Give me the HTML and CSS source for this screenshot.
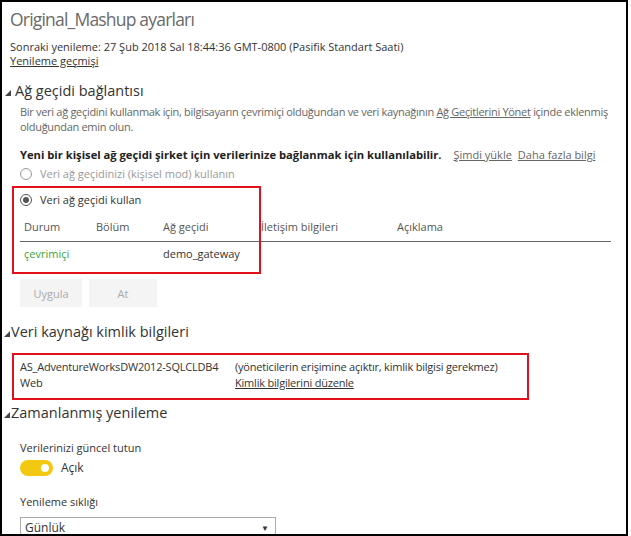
FILE: index.html
```html
<!DOCTYPE html>
<html lang="tr">
<head>
<meta charset="utf-8">
<title>Original_Mashup ayarları</title>
<link rel="stylesheet" href="styles.css">
</head>
<body>
<div class="frame">
  <h1 class="title">Original_Mashup ayarları</h1>
  <div class="meta">
    <div class="line">Sonraki yenileme: 27 Şub 2018 Sal 18:44:36 GMT-0800 (Pasifik Standart Saati)</div>
    <a class="line link dark">Yenileme geçmişi</a>
  </div>

  <h2 class="section first"><span class="tri"></span>Ağ geçidi bağlantısı</h2>
  <div class="sec-body gw">
    <p class="para">Bir veri ağ geçidini kullanmak için, bilgisayarın çevrimiçi olduğundan ve veri kaynağının <a class="link">Ağ Geçitlerini Yönet</a> içinde eklenmiş olduğundan emin olun.</p>
    <div class="boldrow">
      <span class="bold">Yeni bir kişisel ağ geçidi şirket için verilerinize bağlanmak için kullanılabilir.</span>
      <a class="link small">Şimdi yükle</a>
      <a class="link small">Daha fazla bilgi</a>
    </div>
    <div class="radio disabled"><span class="circle"></span>Veri ağ geçidinizi (kişisel mod) kullanın</div>
    <div class="radio"><span class="circle checked"></span>Veri ağ geçidi kullan</div>
    <div class="table">
      <div class="trow head">
        <span class="c1">Durum</span><span class="c2">Bölüm</span><span class="c3">Ağ geçidi</span><span class="c4">İletişim bilgileri</span><span class="c5">Açıklama</span>
      </div>
      <div class="trow">
        <span class="c1 online">çevrimiçi</span><span class="c2"></span><span class="c3">demo_gateway</span><span class="c4"></span><span class="c5"></span>
      </div>
    </div>
    <div class="buttons">
      <span class="btn b1">Uygula</span>
      <span class="btn b2">At</span>
    </div>
    <div class="highlight"></div>
  </div>

  <h2 class="section s2"><span class="tri"></span>Veri kaynağı kimlik bilgileri</h2>
  <div class="credbox">
    <div>AS_AdventureWorksDW2012-SQLCLDB4</div>
    <div>(yöneticilerin erişimine açıktır, kimlik bilgisi gerekmez)</div>
    <div>Web</div>
    <div><a class="link dark">Kimlik bilgilerini düzenle</a></div>
  </div>

  <h2 class="section s3"><span class="tri"></span>Zamanlanmış yenileme</h2>
  <div class="sec-body sched">
    <div class="label">Verilerinizi güncel tutun</div>
    <div class="toggle-row"><span class="toggle"><span class="knob"></span></span><span class="on">Açık</span></div>
    <div class="label l2">Yenileme sıklığı</div>
    <div class="select"><span>Günlük</span><span class="arrow">▼</span></div>
  </div>
</div>
</body>
</html>
```
FILE: styles.css
```css
html, body {
  margin: 0;
  padding: 0;
  background: #fff;
}
body {
  font-family: "Open Sans", "Noto Sans", sans-serif;
  font-size: 11px;
  color: #333;
}
.frame {
  box-sizing: border-box;
  width: 628px;
  height: 536px;
  border: 2px solid #000;
  padding: 0 0 0 8px;
  overflow: hidden;
}
.title {
  margin: 4px 0 0 0;
  font-size: 17.5px;
  letter-spacing: -0.8px;
  font-weight: 400;
  color: #6a6a6a;
  line-height: 26px;
}
.meta {
  margin-top: 8px;
}
.line {
  display: block;
  line-height: 14px;
  height: 14px;
}
.link {
  text-decoration: underline;
  color: #666;
}
.link.dark {
  color: #333;
}
.section {
  display: flex;
  align-items: center;
  margin: 13px 0 0 -5px;
  font-size: 14.5px;
  font-weight: 400;
  color: #333;
  line-height: 20px;
  height: 20px;
}
.tri {
  width: 0;
  height: 0;
  border-left: 6px solid transparent;
  border-bottom: 6px solid #444;
  margin: 4px 1px 0 -1px;
}
.section.first .tri {
  margin-right: 4px;
  margin-left: 0;
}
.sec-body {
  padding: 3px 0 0 10px;
  position: relative;
}
.para {
  margin: 0;
  color: #666;
  line-height: 15px;
  letter-spacing: -0.3px;
}
.boldrow {
  margin-top: 13px;
  display: flex;
  align-items: baseline;
  line-height: 15px;
  height: 15px;
}
.bold {
  font-weight: 700;
  color: #222;
  font-size: 11.2px;
  margin-right: 12px;
}
.small {
  margin-right: 6px;
}
.radio {
  display: flex;
  align-items: center;
  line-height: 18px;
  height: 18px;
  margin-top: 3px;
  color: #333;
}
.radio + .radio {
  margin-top: 8px;
}
.radio.disabled {
  color: #999;
}
.circle {
  box-sizing: border-box;
  width: 12px;
  height: 12px;
  border: 1px solid #999;
  border-radius: 50%;
  margin-right: 8px;
  position: relative;
}
.circle.checked {
  border-color: #555;
}
.circle.checked::after {
  content: "";
  position: absolute;
  left: 2px;
  top: 2px;
  width: 6px;
  height: 6px;
  border-radius: 50%;
  background: #555;
}
.table {
  margin-top: 10px;
  width: 591px;
}
.trow {
  display: flex;
  line-height: 16px;
  padding: 0 0 0 4px;
}
.trow.head {
  color: #555;
  padding-bottom: 6px;
  border-bottom: 1px solid #666;
}
.trow:not(.head) {
  padding-top: 4px;
}
.c1 { width: 72px; }
.c2 { width: 67px; }
.c3 { width: 98px; }
.c4 { width: 136px; }
.c5 { flex: 1; }
.online { color: #3aa535; }
.buttons {
  display: flex;
  gap: 7px;
  margin-top: 17px;
}
.btn {
  display: flex;
  align-items: center;
  justify-content: center;
  height: 28px;
  background: #f4f4f4;
  color: #aaa;
}
.b1 { width: 62px; }
.b2 { width: 68px; }
.highlight {
  position: absolute;
  left: 2px;
  top: 85px;
  width: 245px;
  height: 84px;
  border: 2px solid #e3101c;
  pointer-events: none;
}
.section.s2 {
  margin-top: 15px;
}
.credbox {
  display: grid;
  grid-template-columns: 215px auto;
  margin: 11px 0 0 2px;
  width: 501px;
  border: 2px solid #e3101c;
  padding: 4px 6px 7px 6px;
  line-height: 16px;
  color: #333;
  letter-spacing: -0.2px;
}
.section.s3 {
  margin-top: 3px;
}
.sched {
  padding-top: 0;
}
.sched .label {
  margin-top: 17px;
  line-height: 16px;
  height: 16px;
}
.toggle-row {
  display: flex;
  align-items: center;
  height: 18px;
  margin-top: 3px;
}
.toggle {
  box-sizing: border-box;
  width: 33px;
  height: 16px;
  border-radius: 8px;
  background: #f2c811;
  position: relative;
  margin-right: 8px;
}
.knob {
  position: absolute;
  right: 4px;
  top: 4px;
  width: 8px;
  height: 8px;
  border-radius: 50%;
  background: #fff;
}
.on {
  font-size: 12px;
  line-height: 18px;
}
.select {
  box-sizing: border-box;
  margin-top: 7px;
  width: 256px;
  height: 20px;
  border: 1px solid #aaa;
  border-bottom: 0;
  display: flex;
  justify-content: space-between;
  align-items: center;
  padding: 0 6px 0 4px;
  font-size: 12px;
}
.arrow {
  font-size: 8px;
  color: #333;
}
```
